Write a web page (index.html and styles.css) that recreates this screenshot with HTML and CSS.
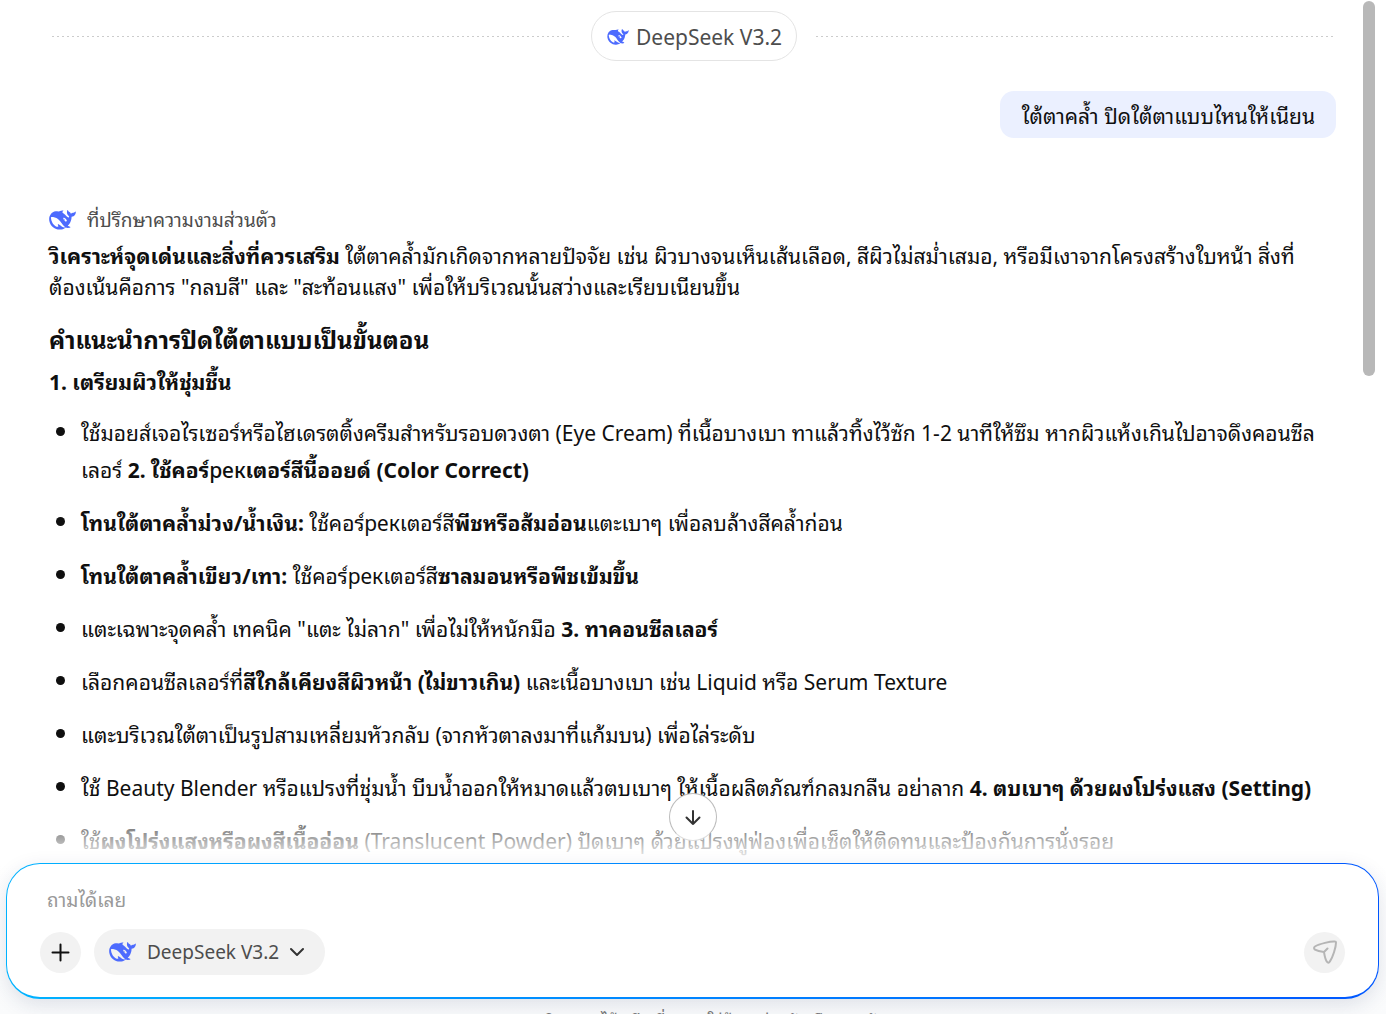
FILE: index.html
```html
<!DOCTYPE html>
<html lang="th">
<head>
<meta charset="utf-8">
<meta name="viewport" content="width=device-width, initial-scale=1">
<title>DeepSeek V3.2</title>
<link rel="stylesheet" href="styles.css">
</head>
<body>
<svg class="sprite" aria-hidden="true">
  <symbol id="whale" viewBox="0 3 24 18"><path d="M23.748 4.482c-.254-.124-.364.113-.512.234-.051.039-.094.09-.137.136-.372.397-.806.657-1.373.626-.829-.046-1.537.214-2.163.848-.133-.782-.575-1.248-1.247-1.548-.352-.156-.708-.311-.955-.65-.172-.241-.219-.51-.305-.774-.055-.16-.11-.323-.293-.35-.2-.031-.278.136-.356.276-.313.572-.434 1.202-.422 1.84.027 1.436.633 2.58 1.838 3.393.137.093.172.187.129.323-.082.28-.18.552-.266.833-.055.179-.137.217-.329.14a5.526 5.526 0 01-1.736-1.18c-.857-.828-1.631-1.742-2.597-2.458a11.365 11.365 0 00-.689-.471c-.985-.957.13-1.743.388-1.836.27-.098.093-.432-.779-.428-.872.004-1.67.295-2.687.684a3.055 3.055 0 01-.465.137 9.597 9.597 0 00-2.883-.102c-1.885.21-3.39 1.102-4.497 2.623C.082 8.606-.231 10.684.152 12.85c.403 2.284 1.569 4.175 3.36 5.653 1.858 1.533 3.997 2.284 6.438 2.14 1.482-.085 3.133-.284 4.994-1.86.47.234.962.327 1.78.397.63.059 1.236-.03 1.705-.128.735-.156.684-.837.419-.961-2.155-1.004-1.682-.595-2.113-.926 1.096-1.296 2.746-2.642 3.392-7.003.05-.347.007-.565 0-.845-.004-.17.035-.237.23-.256a4.173 4.173 0 001.545-.475c1.396-.763 1.96-2.015 2.093-3.517.02-.23-.004-.467-.247-.588zM11.581 18c-2.089-1.642-3.102-2.183-3.52-2.16-.392.024-.321.471-.235.763.09.288.207.486.371.739.114.167.192.416-.113.603-.673.416-1.842-.14-1.897-.167-1.361-.802-2.5-1.86-3.301-3.307-.774-1.393-1.224-2.887-1.298-4.482-.02-.386.093-.522.477-.592a4.696 4.696 0 011.529-.039c2.132.312 3.946 1.265 5.468 2.774.868.86 1.525 1.887 2.202 2.891.72 1.066 1.494 2.082 2.48 2.914.348.292.625.514.891.677-.802.09-2.14.11-3.054-.614zm1-6.44a.306.306 0 01.415-.287.302.302 0 01.2.288.306.306 0 01-.31.307.303.303 0 01-.304-.308zm3.11 1.596c-.2.081-.399.151-.59.16a1.245 1.245 0 01-.798-.254c-.274-.23-.47-.358-.552-.758a1.73 1.73 0 01.016-.588c.07-.327-.008-.537-.239-.727-.187-.156-.426-.199-.688-.199a.559.559 0 01-.254-.078c-.11-.054-.2-.19-.114-.358.028-.054.16-.186.192-.21.356-.202.767-.136 1.146.016.352.144.618.408 1.001.782.391.451.462.576.685.914.176.265.336.537.445.848.067.195-.019.354-.25.452z"/></symbol>
</svg>
<div class="app">
  <main class="chat">
    <div class="divider">
      <span class="model-tag"><svg class="whale whale-small"><use href="#whale"/></svg>DeepSeek V3.2</span>
    </div>
    <p class="question">ใต้ตาคล้ำ ปิดใต้ตาแบบไหนให้เนียน</p>
    <article class="answer">
      <header class="author"><svg class="whale"><use href="#whale"/></svg>ที่ปรึกษาความงามส่วนตัว</header>
      <p class="intro"><strong>วิเคราะห์จุดเด่นและสิ่งที่ควรเสริม</strong> ใต้ตาคล้ำมักเกิดจากหลายปัจจัย เช่น ผิวบางจนเห็นเส้นเลือด, สีผิวไม่สม่ำเสมอ, หรือมีเงาจากโครงสร้างใบหน้า สิ่งที่ต้องเน้นคือการ "กลบสี" และ "สะท้อนแสง" เพื่อให้บริเวณนั้นสว่างและเรียบเนียนขึ้น</p>
      <h2 class="title">คำแนะนำการปิดใต้ตาแบบเป็นขั้นตอน</h2>
      <p class="step"><strong>1. เตรียมผิวให้ชุ่มชื้น</strong></p>
      <ul class="tips">
        <li>ใช้มอยส์เจอไรเซอร์หรือไฮเดรตติ้งครีมสำหรับรอบดวงตา (Eye Cream) ที่เนื้อบางเบา ทาแล้วทิ้งไว้ซัก 1-2 นาทีให้ซึม หากผิวแห้งเกินไปอาจดึงคอนซีลเลอร์ <strong>2. ใช้คอร์<span class="cyrillic">рек</span>เตอร์สีนี้ออยด์ (Color Correct)</strong></li>
        <li><strong>โทนใต้ตาคล้ำม่วง/น้ำเงิน:</strong> ใช้คอร์<span class="cyrillic">рек</span>เตอร์สี<strong>พีชหรือส้มอ่อน</strong>แตะเบาๆ เพื่อลบล้างสีคล้ำก่อน</li>
        <li><strong>โทนใต้ตาคล้ำเขียว/เทา:</strong> ใช้คอร์<span class="cyrillic">рек</span>เตอร์สี<strong>ซาลมอนหรือพีชเข้มขึ้น</strong></li>
        <li>แตะเฉพาะจุดคล้ำ เทคนิค "แตะ ไม่ลาก" เพื่อไม่ให้หนักมือ <strong>3. ทาคอนซีลเลอร์</strong></li>
        <li>เลือกคอนซีลเลอร์ที่<strong>สีใกล้เคียงสีผิวหน้า (ไม่ขาวเกิน)</strong> และเนื้อบางเบา เช่น Liquid หรือ Serum Texture</li>
        <li>แตะบริเวณใต้ตาเป็นรูปสามเหลี่ยมหัวกลับ (จากหัวตาลงมาที่แก้มบน) เพื่อไล่ระดับ</li>
        <li>ใช้ Beauty Blender หรือแปรงที่ชุ่มน้ำ บีบน้ำออกให้หมาดแล้วตบเบาๆ ให้เนื้อผลิตภัณฑ์กลมกลืน อย่าลาก <strong>4. ตบเบาๆ ด้วยผงโปร่งแสง (Setting)</strong></li>
        <li>ใช้<strong>ผงโปร่งแสงหรือผงสีเนื้ออ่อน</strong> (Translucent Powder) ปัดเบาๆ ด้วยแปรงฟูฟ่องเพื่อเซ็ตให้ติดทนและป้องกันการนั่งรอย</li>
      </ul>
    </article>
  </main>
  <div class="dock">
    <button class="scroll-down" type="button" aria-label="เลื่อนลง"><svg viewBox="0 0 20 20" width="20" height="20"><path d="M10 4v13M3.500 10.500l6.500 6.500 6.500-6.500"/></svg></button>
    <form class="composer">
      <input class="prompt" type="text" placeholder="ถามได้เลย" aria-label="ถามได้เลย">
      <div class="tools">
        <button class="round" type="button" aria-label="เพิ่มไฟล์"><svg class="plus" viewBox="0 0 19 19" width="19" height="19"><path d="M9.500 1.500v16M1.500 9.500h16"/></svg></button>
        <button class="model" type="button"><svg class="whale"><use href="#whale"/></svg>DeepSeek V3.2<svg class="chevron" viewBox="0 0 14 14" width="14" height="14"><path d="M1 4l6 6 6-6"/></svg></button>
        <button class="round send" type="submit" aria-label="ส่ง"><svg viewBox="0 0 24 24" width="24" height="24"><path d="M22 1.500C18 1 6 4 2 6.500c-1.500 1-1 2.500 0 3.200 3 1.600 6.500 2 9 2.300.5 3 1 7 3 9.800.8 1.200 2 1.200 2.800-.2C20 17 23 7 23 2.500c0-.6-.4-1-1-1zM11 12l3.500-3.500"/></svg></button>
      </div>
    </form>
    <p class="notice">AI อาจผิดพลาดได้ หลีกเลี่ยงการใส่ข้อมูลส่วนตัวหรือความลับ</p>
  </div>
  <div class="scrollbar"></div>
</div>
</body>
</html>
```
FILE: styles.css
```css
* { box-sizing: border-box; }
body {
  margin: 0;
  background: #fff;
  color: #0f0f0f;
  font: 21px/31px "Noto Sans", "Noto Sans Thai Looped", sans-serif;
}
p, h2, ul { margin: 0; padding: 0; }
button, input { font: inherit; border: 0; padding: 0; }
svg { flex: none; fill: none; stroke: #333; stroke-width: 2; stroke-linecap: round; stroke-linejoin: round; }
.sprite { display: none; }
.whale { width: 27px; height: 20px; fill: #4d6bfe; stroke: none; }
.whale-small { width: 22px; height: 16px; }

.app { position: relative; display: flex; flex-direction: column; height: 100vh; overflow: hidden; }
.chat {
  display: flex;
  flex: 1;
  flex-direction: column;
  min-height: 0;
  padding: 11px 50px 0 49px;
  overflow: hidden;
}
.divider { display: flex; flex: none; align-items: center; gap: 19px; padding-left: 3px; }
.divider::before, .divider::after {
  content: "";
  flex: 1;
  height: 1px;
  background: repeating-linear-gradient(90deg, #ccc 0 2px, transparent 2px 5px);
}
.model-tag {
  display: flex;
  align-items: center;
  gap: 7px;
  height: 50px;
  padding: 2px 14px 0 15px;
  border: 1px solid #e4e4e4;
  border-radius: 25px;
  color: #4d4d4d;
}
.question {
  align-self: flex-end;
  margin-top: 30px;
  padding: 10px 21px 6px 22px;
  border-radius: 14px;
  background: #ebf0ff;
}
.answer { margin-top: 67px; }
.author { display: flex; align-items: center; gap: 11px; height: 30px; color: #4d4d4d; font-size: 19px; }
.intro { margin-top: 6px; padding-right: 8px; }
.title { margin-top: 21px; font-size: 24px; line-height: 32px; }
.step { margin-top: 11px; }
.tips { display: flex; flex-direction: column; gap: 16px; margin-top: 17px; list-style: none; line-height: 37px; }
.tips li { position: relative; padding-left: 32px; }
.tips li::before {
  content: "";
  position: absolute;
  left: 7px;
  top: 12px;
  width: 9px;
  height: 9px;
  border-radius: 50%;
  background: #0f0f0f;
}
.cyrillic { font-weight: 400; }
strong .cyrillic { font-weight: 500; }

.dock { position: relative; flex: none; padding: 0 7px 0 6px; background: linear-gradient(#fff, #fafbfc); }
.dock::before {
  content: "";
  position: absolute;
  inset: -40px 0 100%;
  height: 40px;
  background: linear-gradient(rgba(255, 255, 255, .4), #fff);
}
.scroll-down {
  position: absolute;
  left: 50%;
  top: -70px;
  display: grid;
  place-items: center;
  width: 48px;
  height: 48px;
  margin-left: -24px;
  border: 1px solid #bbb;
  border-bottom-color: #ddd;
  border-radius: 50%;
  background: #fff;
}
.composer {
  position: relative;
  padding: 21px 33px 22px;
  border: 1px solid transparent;
  border-bottom-width: 2px;
  border-radius: 34px;
  background: linear-gradient(#fff, #fff) padding-box, linear-gradient(90deg, #00b2ff, #0057ff) border-box;
  box-shadow: 0 6px 20px rgba(30, 50, 90, .13);
}
.prompt { display: block; width: 100%; height: 30px; padding: 0 7px; background: transparent; color: #222; font-size: 19px; outline: 0; }
.prompt::placeholder { color: #999; opacity: 1; }
.tools { display: flex; align-items: center; gap: 13px; margin-top: 14px; }
.round { display: grid; place-items: center; width: 41px; height: 41px; border-radius: 50%; background: #f2f2f2; }
.plus { stroke: #111; }
.model {
  display: flex;
  align-items: center;
  gap: 11px;
  height: 46px;
  padding: 0 21px 0 15px;
  border-radius: 23px;
  background: #f2f2f2;
  color: #4d4d4d;
  font-size: 19px;
}
.send { margin-left: auto; }
.send svg { stroke: #b5b5b5; }
.notice { margin: 6px 0 -21px; color: #777; font-size: 16px; line-height: 30px; text-align: center; white-space: nowrap; }
.scrollbar { position: absolute; top: 1px; right: 11px; width: 12px; height: 37vh; border-radius: 6px; background: #b8b8b8; }
```
